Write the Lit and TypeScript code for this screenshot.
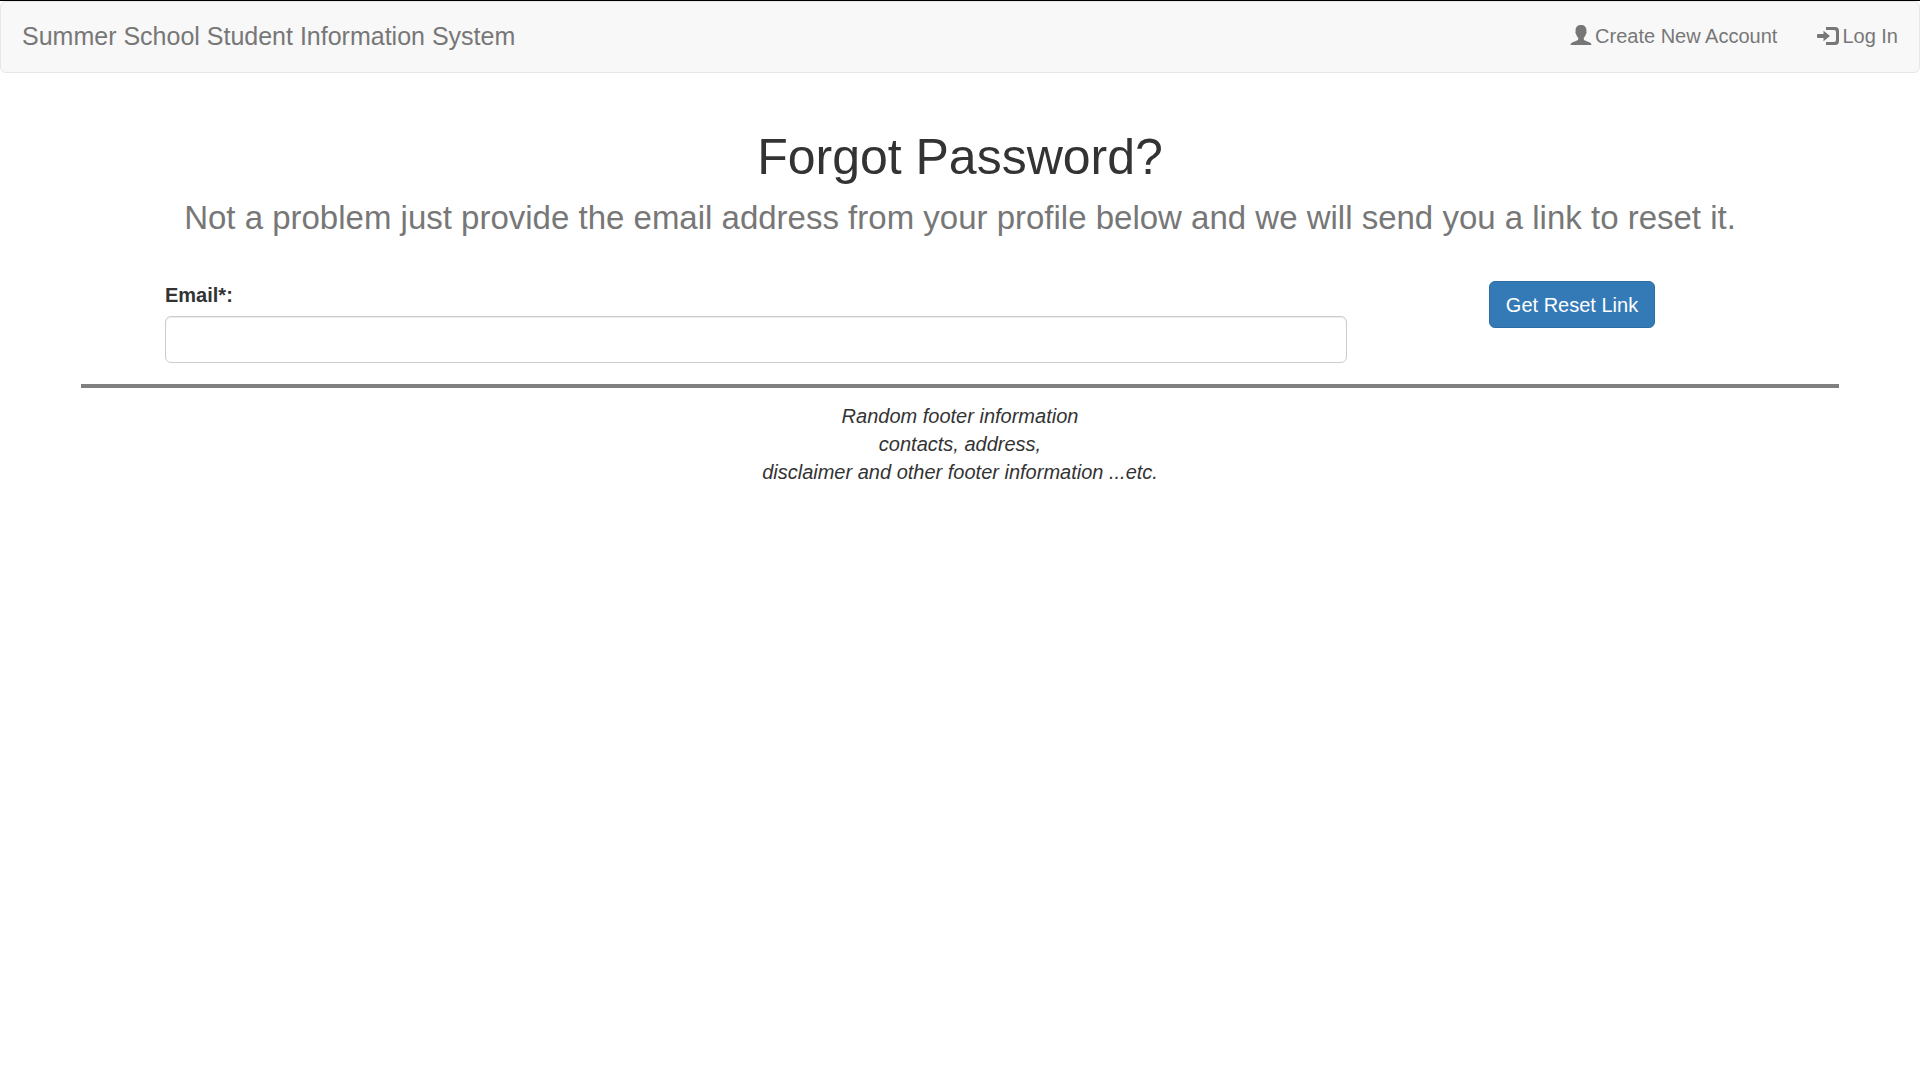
import { LitElement, html, css } from "lit";
import { customElement, state } from "lit/decorators.js";

@customElement("app-root")
export class AppRoot extends LitElement {
  @state() private email = "";

  static styles = css`
    :host {
      display: block;
      min-height: 100vh;
      background: #fff;
      color: #333;
      font-family: "Liberation Sans", Arial, sans-serif;
      font-size: 20px;
      line-height: 28px;
      border-top: 1px solid #000;
      box-sizing: border-box;
    }
    * {
      box-sizing: border-box;
    }
    .navbar {
      display: flex;
      align-items: center;
      justify-content: space-between;
      flex-wrap: wrap;
      min-height: 72px;
      padding: 0 21px 2px;
      background: #f8f8f8;
      border: 1px solid #e7e7e7;
      border-radius: 6px;
    }
    .navbar a {
      color: #777;
      text-decoration: none;
    }
    .brand {
      font-size: 25px;
    }
    .links {
      display: flex;
      gap: 40px;
      margin: 0;
      padding: 0;
      list-style: none;
    }
    .links a {
      display: flex;
      align-items: center;
      gap: 3px;
    }
    .icon {
      width: 22px;
      height: 22px;
      fill: currentColor;
    }
    .intro {
      margin: 57px 20px 45px;
      text-align: center;
    }
    h1 {
      margin: 0 0 15px;
      font-size: 50px;
      font-weight: 400;
      line-height: 55px;
    }
    .lead {
      margin: 0;
      color: #777;
      font-size: 33px;
      line-height: 36px;
    }
    .form {
      display: grid;
      grid-template-columns: 3fr 1fr;
      width: 85%;
      margin: 0 auto 21px;
    }
    .field {
      display: flex;
      flex-direction: column;
      gap: 7px;
      padding: 0 21px;
    }
    label {
      font-weight: 700;
    }
    input {
      width: 100%;
      height: 47px;
      padding: 8px 16px;
      color: #555;
      font: inherit;
      background: #fff;
      border: 1px solid #ccc;
      border-radius: 6px;
      box-shadow: inset 0 1px 1px rgba(0, 0, 0, 0.075);
    }
    .action {
      padding: 0 21px;
      text-align: center;
    }
    button {
      height: 47px;
      padding: 0 16px;
      color: #fff;
      font: inherit;
      background: #337ab7;
      border: 1px solid #2e6da4;
      border-radius: 6px;
      cursor: pointer;
    }
    .footer {
      margin: 0 81px;
      padding-top: 14px;
      border-top: 4px solid #808080;
      font-style: italic;
      text-align: center;
    }
  `;

  private onInput(e: Event) {
    this.email = (e.target as HTMLInputElement).value;
  }

  render() {
    return html`
      <nav class="navbar">
        <a class="brand" href="#">Summer School Student Information System</a>
        <ul class="links">
          <li>
            <a href="#register">
              <svg class="icon" viewBox="0 1 22 22" aria-hidden="true">
                <path
                  d="M11 1C7.600 1 5.600 3.100 5.600 6.100c0 .8.1 1.200-.1 1.700-.3.7 0 1.700.6 2.300.4 1.900 1.200 3 2.100 3.700v1.300c0 .8-.4 1.200-1.200 1.500L2.200 18.500C1.100 19 .6 19.600.6 21h20.800c0-1.400-.5-2-1.600-2.500L15 16.600c-.8-.3-1.200-.7-1.200-1.500v-1.300c.9-.7 1.700-1.800 2.100-3.700.6-.6.9-1.600.6-2.300-.2-.5-.1-.9-.1-1.700C16.400 3.100 14.400 1 11 1z"
                />
              </svg>
              <span>Create New Account</span>
            </a>
          </li>
          <li>
            <a href="#login">
              <svg class="icon" viewBox="0 0 22 22" aria-hidden="true">
                <path
                  d="M9 2h9a4 4 0 0 1 4 4v10a4 4 0 0 1-4 4H9v-3h8a2 2 0 0 0 2-2V7a2 2 0 0 0-2-2H9z"
                />
                <path
                  d="M6.500 5.700 13 11l-6.500 5.300V13H1a1 1 0 0 1-1-1v-2a1 1 0 0 1 1-1h5.500z"
                />
              </svg>
              <span>Log In</span>
            </a>
          </li>
        </ul>
      </nav>
      <main>
        <header class="intro">
          <h1>Forgot Password?</h1>
          <p class="lead">
            Not a problem just provide the email address from your profile below
            and we will send you a link to reset it.
          </p>
        </header>
        <form class="form" @submit=${(e: Event) => e.preventDefault()}>
          <div class="field">
            <label for="email">Email*:</label>
            <input
              id="email"
              type="email"
              required
              .value=${this.email}
              @input=${this.onInput}
            />
          </div>
          <div class="action">
            <button type="submit">Get Reset Link</button>
          </div>
        </form>
      </main>
      <footer class="footer">
        Random footer information<br />
        contacts, address,<br />
        disclaimer and other footer information ...etc.
      </footer>
    `;
  }
}
